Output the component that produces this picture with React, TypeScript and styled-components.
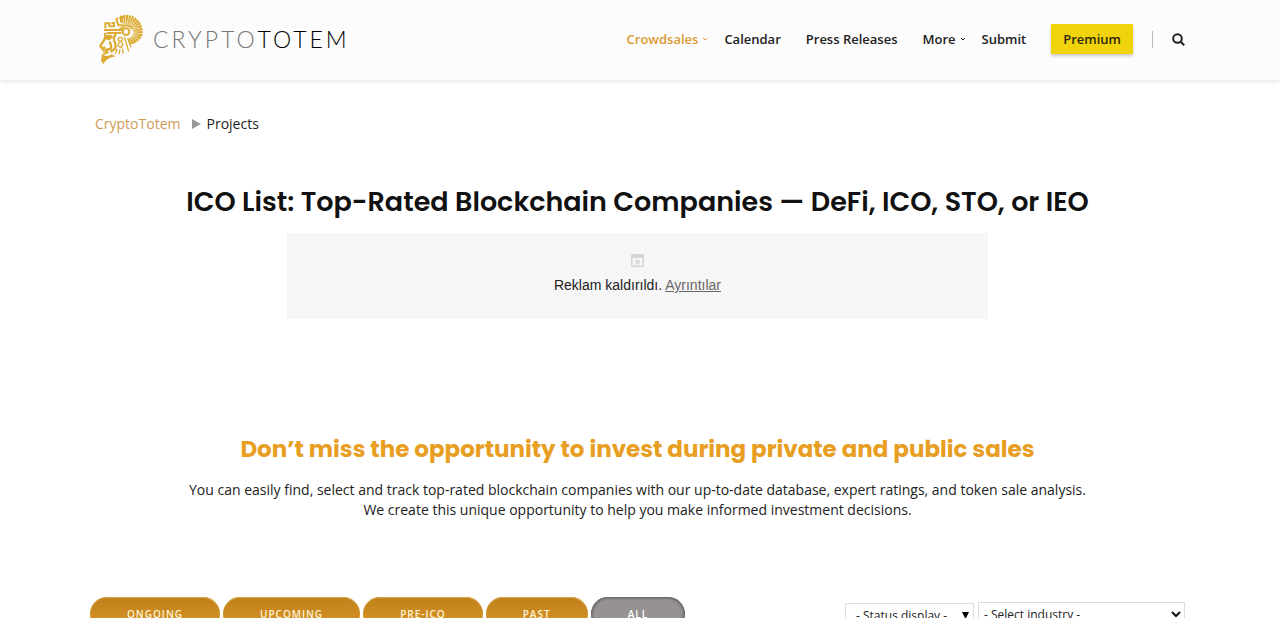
import React from "react";
import styled, { createGlobalStyle, css } from "styled-components";

const GlobalStyle = createGlobalStyle`
  * { box-sizing: border-box; }
  body {
    margin: 0;
    background: #fff;
    color: #222;
    font-family: "Open Sans", "Noto Sans", sans-serif;
    font-size: 14px;
    line-height: 20px;
    overflow-x: hidden;
  }
  h1, h2, p { margin: 0; }
  a { color: inherit; text-decoration: none; }
`;

const Shell = styled.div`
  padding: 0 95px 0 90px;
`;

const Container = styled.div`
  width: 100%;
  max-width: 1095px;
  margin: 0 auto;
`;

const Header = styled.header`
  padding: 0 95px 0 90px;
  background: #fcfcfc;
  box-shadow: 0 1px 6px rgba(0, 0, 0, 0.12);
`;

const HeaderRow = styled(Container)`
  display: flex;
  align-items: center;
  justify-content: space-between;
  height: 80px;
`;

const Logo = styled.a`
  display: flex;
  align-items: center;
  gap: 9px;
  padding-left: 8px;
`;

const Wordmark = styled.span`
  display: flex;
  padding-bottom: 2px;
  font-family: Lato, sans-serif;
  font-size: 23px;
  font-weight: 300;
  line-height: 32px;
  letter-spacing: 3px;
  color: #777;
`;

const WordmarkDark = styled.span`
  color: #000;
`;

const Nav = styled.nav`
  display: flex;
  align-items: center;
  padding-bottom: 2px;
  font-size: 13px;
  font-weight: 600;
`;

const NavLink = styled.a<{ $active?: boolean; $menu?: boolean }>`
  display: flex;
  align-items: center;
  gap: 4px;
  margin-right: ${(p) => (p.$menu ? 16 : 25)}px;
  color: ${(p) => (p.$active ? "#dd9933" : "#222")};
`;

const Premium = styled.a`
  padding: 5px 12px;
  background: #f0d30a;
  color: #2d2608;
  box-shadow: 0 2px 3px rgba(0, 0, 0, 0.2);
`;

const Divider = styled.span`
  width: 1px;
  height: 17px;
  margin: 0 19px;
  background: #bbb;
`;

const IconButton = styled.button`
  display: flex;
  padding: 0;
  border: 0;
  background: none;
  color: #222;
`;

const Breadcrumb = styled.nav`
  display: flex;
  align-items: center;
  gap: 5px;
  padding: 34px 5px 0;
`;

const Crumb = styled.a`
  margin-right: 6px;
  color: #cf9a58;
`;

const Title = styled.h1`
  margin-top: 48px;
  font-family: Poppins, Inter, sans-serif;
  font-size: 27px;
  font-weight: 600;
  line-height: 40px;
  text-align: center;
  color: #111;
`;

const Notice = styled.aside`
  display: flex;
  flex-direction: column;
  align-items: center;
  gap: 8px;
  width: 64%;
  margin: 11px auto 0;
  padding: 21px 0 24px;
  background: #f6f6f6;
  font-family: "Liberation Sans", sans-serif;
  font-size: 14px;
  line-height: 20px;
`;

const NoticeLink = styled.a`
  color: #666;
  text-decoration: underline;
`;

const Subtitle = styled.h2`
  margin-top: 114px;
  font-family: Poppins, Inter, sans-serif;
  font-size: 23px;
  font-weight: 700;
  line-height: 32px;
  text-align: center;
  color: #e79e22;
`;

const Intro = styled.p`
  margin-top: 15px;
  text-align: center;
`;

const Filters = styled.div`
  display: flex;
  justify-content: space-between;
  margin-top: 77px;
  padding-bottom: 24px;
`;

const Tabs = styled.div`
  display: flex;
  gap: 3px;
`;

const Tab = styled.button<{ $active?: boolean }>`
  height: 34px;
  padding: 0 37px;
  border: 0;
  border-radius: 17px;
  background: linear-gradient(#c08019, #d9982c);
  box-shadow: inset 0 1px 1px #d8a850;
  color: #fff3d6;
  font-family: inherit;
  font-size: 10px;
  font-weight: 600;
  letter-spacing: 1px;
  text-transform: uppercase;
  ${(p) =>
    p.$active &&
    css`
      background: #969292;
      box-shadow: inset 0 0 3px 1px #555;
      color: #fff;
    `}
`;

const Selects = styled.div`
  display: flex;
  align-items: flex-start;
  gap: 4px;
  padding-top: 5px;
`;

const SelectBox = styled.label<{ $wide?: boolean }>`
  display: flex;
  align-items: center;
  position: relative;
  width: ${(p) => (p.$wide ? 207 : 129)}px;
  margin-top: ${(p) => (p.$wide ? 0 : 1)}px;

  svg {
    position: absolute;
    right: ${(p) => (p.$wide ? 4 : 5)}px;
    pointer-events: none;
  }
`;

const Select = styled.select<{ $wide?: boolean }>`
  appearance: none;
  width: 100%;
  height: 25px;
  padding: 0 ${(p) => (p.$wide ? 5 : 10)}px;
  border: 1px solid #ddd;
  border-radius: 0;
  background: #fff;
  color: #222;
  font-family: inherit;
  font-size: 12px;
`;

const Caret = () => (
  <svg width="6" height="4" viewBox="0 0 6 4" fill="none" stroke="currentColor" aria-hidden="true">
    <path d="M1 1l2 2 2-2" />
  </svg>
);

const rays = [-108, -97, -86, -75, -64, -53, -42, -31, -20, -9, 2, 13, 24, 35, 46, 57, 68];

const TotemHead = () => (
  <svg width="46" height="52" viewBox="24 24 138 156" fill="none" stroke="#dcab34" strokeWidth="5" aria-hidden="true">
    {rays.map((a, i) => {
      const end = 53 - Math.max(0, i - 11) * 2;
      return (
        <g key={a} transform={`translate(108 77) rotate(${a})`}>
          <path d={`M21 -1L${end - 4} -4Q${end} 0 ${end - 4} 4L21 1Z`} fill="#dcab34" stroke="none" />
        </g>
      );
    })}
    <circle cx="108" cy="77" r="10" strokeWidth="6" />
    <path d="M88 68H94Q102 56 112 59Q122 61 126 70" />
    <path d="M100 33L91 36L94 50M84 36L79 40L85 58L98 58" strokeWidth="6" />
    <path d="M46 67V52H58V61H72V51H64M42 72H96M50 81H94" strokeWidth="6" />
    <path d="M44 81Q50 91 43 101L31 120L36 127L46 124" strokeWidth="7" />
    <path d="M48 90L62 87L68 93L58 102L47 98" fill="#dcab34" strokeWidth="3" />
    <path d="M77 84Q69 96 73 106Q81 117 73 130L61 137M58 107Q67 118 62 128L46 132M37 134L49 132L52 139L40 144" strokeWidth="7" />
    <path d="M36 143Q49 156 64 145L77 151Q60 154 52 160L39 174L33 164Z" fill="#dcab34" stroke="none" />
    <circle cx="91" cy="100" r="6" strokeWidth="4" />
    <path d="M88 107L84 119L93 125L99 116L93 106M82 128L76 143M90 130L87 145M98 128L99 143" strokeWidth="4" />
    <path d="M103 94L108 108L116 137M113 96L123 124" strokeWidth="4" />
  </svg>
);

const SearchIcon = () => (
  <svg width="13" height="13" viewBox="0 0 13 13" fill="none" stroke="currentColor" strokeWidth="2" aria-hidden="true">
    <circle cx="5.5" cy="5.5" r="4.3" />
    <path d="M8.7 8.7L12.2 12.2" />
  </svg>
);

export default function App() {
  return (
    <>
      <GlobalStyle />
      <Header>
        <HeaderRow>
          <Logo href="#" aria-label="CryptoTotem">
            <TotemHead />
            <Wordmark>
              CRYPTO<WordmarkDark>TOTEM</WordmarkDark>
            </Wordmark>
          </Logo>
          <Nav>
            <NavLink href="#" $active $menu>Crowdsales <Caret /></NavLink>
            <NavLink href="#">Calendar</NavLink>
            <NavLink href="#">Press Releases</NavLink>
            <NavLink href="#" $menu>More <Caret /></NavLink>
            <NavLink href="#">Submit</NavLink>
            <Premium href="#">Premium</Premium>
            <Divider />
            <IconButton aria-label="Search"><SearchIcon /></IconButton>
          </Nav>
        </HeaderRow>
      </Header>
      <Shell>
        <Container as="main">
          <Breadcrumb aria-label="Breadcrumb">
            <Crumb href="#">CryptoTotem</Crumb>
            <svg width="10" height="10" viewBox="0 0 10 10" fill="#999" aria-hidden="true">
              <path d="M1 0L10 5L1 10Z" />
            </svg>
            <span>Projects</span>
          </Breadcrumb>
          <Title>ICO List: Top-Rated Blockchain Companies — DeFi, ICO, STO, or IEO</Title>
          <Notice>
            <svg width="13" height="13" viewBox="0 0 13 13" fill="none" stroke="#d4d4d4" aria-hidden="true">
              <rect x="0.75" y="0.75" width="11.5" height="11.5" rx="1" strokeWidth="1.5" />
              <path d="M1 2.5H12" strokeWidth="3" />
              <path d="M4.5 6L8.5 10M8.5 6L4.5 10" strokeWidth="1.3" />
            </svg>
            <p>Reklam kaldırıldı. <NoticeLink href="#">Ayrıntılar</NoticeLink></p>
          </Notice>
          <Subtitle>Don’t miss the opportunity to invest during private and public sales</Subtitle>
          <Intro>
            You can easily find, select and track top-rated blockchain companies with our up-to-date database, expert ratings, and token sale analysis.
            <br />
            We create this unique opportunity to help you make informed investment decisions.
          </Intro>
          <Filters>
            <Tabs>
              <Tab>Ongoing</Tab>
              <Tab>Upcoming</Tab>
              <Tab>Pre-ICO</Tab>
              <Tab>Past</Tab>
              <Tab $active>All</Tab>
            </Tabs>
            <Selects>
              <SelectBox>
                <Select aria-label="Status display"><option>- Status display -</option></Select>
                <svg width="7" height="7" viewBox="0 0 7 7" aria-hidden="true"><path d="M0 0H7L3.5 7Z" /></svg>
              </SelectBox>
              <SelectBox $wide>
                <Select $wide aria-label="Select industry"><option>- Select industry -</option></Select>
                <svg width="10" height="7" viewBox="0 0 10 7" fill="none" stroke="#111" strokeWidth="2" aria-hidden="true">
                  <path d="M1 1L5 5L9 1" />
                </svg>
              </SelectBox>
            </Selects>
          </Filters>
        </Container>
      </Shell>
    </>
  );
}
